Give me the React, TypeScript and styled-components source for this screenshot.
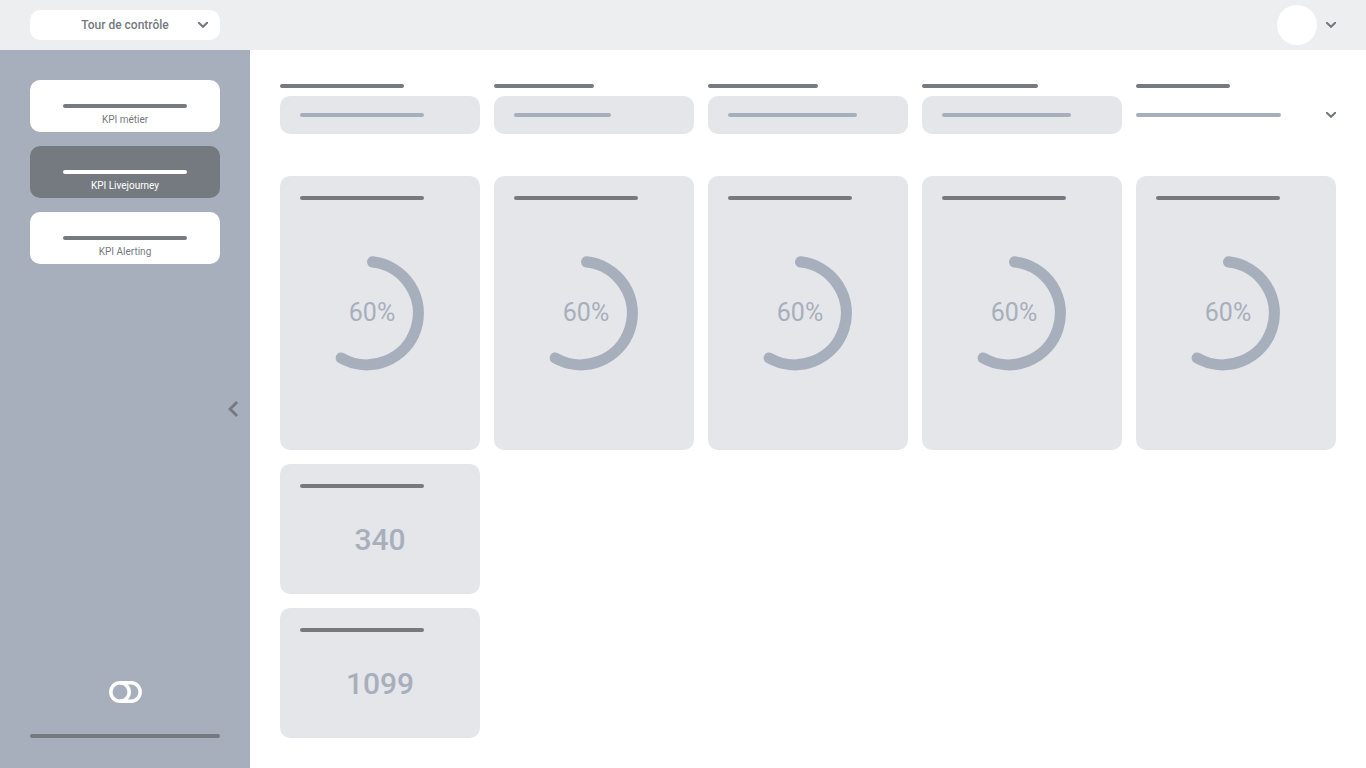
import React from "react";
import styled, { createGlobalStyle } from "styled-components";

const colors = {
  topbar: "#edeef0",
  sidebar: "#a8afbc",
  card: "#e5e6ea",
  dark: "#757a81",
  soft: "#a6afbb",
  white: "#ffffff",
};

const GlobalStyle = createGlobalStyle`
  *, *::before, *::after { box-sizing: border-box; }
  body {
    margin: 0;
    background: ${colors.white};
    color: ${colors.dark};
    font-family: Roboto, "Liberation Sans", sans-serif;
  }
  button, select { font: inherit; color: inherit; border: 0; cursor: pointer; }
`;

const Page = styled.div`
  display: flex;
  flex-direction: column;
  min-height: 100vh;
`;

const TopBar = styled.header`
  display: flex;
  align-items: center;
  justify-content: space-between;
  height: 50px;
  padding: 0 30px;
  background: ${colors.topbar};
`;

const ViewPicker = styled.div`
  position: relative;
  width: 190px;
`;

const ViewSelect = styled.select`
  appearance: none;
  display: block;
  width: 100%;
  height: 30px;
  padding: 0 24px;
  border-radius: 10px;
  background: ${colors.white};
  font-size: 12px;
  font-weight: 500;
  text-align: center;
  text-align-last: center;
`;

const PickerArrow = styled.span`
  position: absolute;
  top: 0;
  right: 12px;
  display: flex;
  align-items: center;
  height: 100%;
  pointer-events: none;
`;

const AccountButton = styled.button`
  display: flex;
  align-items: center;
  gap: 9px;
  padding: 0;
  background: none;
`;

const Avatar = styled.span`
  width: 40px;
  height: 40px;
  border-radius: 50%;
  background: ${colors.white};
`;

const Body = styled.div`
  display: flex;
  flex: 1;
`;

const Sidebar = styled.aside`
  position: relative;
  display: flex;
  flex-direction: column;
  justify-content: space-between;
  flex: 0 0 250px;
  padding: 30px;
  background: ${colors.sidebar};
`;

const Nav = styled.nav`
  display: flex;
  flex-direction: column;
  gap: 14px;
`;

const NavButton = styled.button<{ $active?: boolean }>`
  display: flex;
  flex-direction: column;
  align-items: center;
  gap: 4px;
  height: 52px;
  padding: 24px 0 0;
  border-radius: 10px;
  background: ${(p) => (p.$active ? colors.dark : colors.white)};
  color: ${(p) => (p.$active ? colors.white : colors.dark)};
  font-size: 10px;
  line-height: 16px;
`;

const Bar = styled.span<{ $width?: number; $tone?: string }>`
  display: block;
  flex: none;
  width: ${(p) => (p.$width ? `${p.$width}px` : "100%")};
  max-width: 100%;
  height: 4px;
  border-radius: 2px;
  background: ${(p) => p.$tone ?? colors.dark};
`;

const CollapseButton = styled.button`
  position: absolute;
  top: 50%;
  right: 11px;
  display: flex;
  padding: 0;
  background: none;
  transform: translateY(-50%);
`;

const SidebarFooter = styled.div`
  display: flex;
  flex-direction: column;
  align-items: center;
  gap: 31px;
`;

const Main = styled.main`
  flex: 1;
  min-width: 0;
  padding: 34px 30px 30px;
`;

const Columns = styled.div`
  display: grid;
  grid-template-columns: repeat(5, minmax(0, 1fr));
  gap: 14px;
`;

const Filters = styled(Columns)`
  margin-bottom: 42px;
`;

const Filter = styled.div`
  display: flex;
  flex-direction: column;
  gap: 8px;
`;

const FilterField = styled.button<{ $plain?: boolean }>`
  display: flex;
  align-items: center;
  justify-content: space-between;
  height: 38px;
  padding: ${(p) => (p.$plain ? "0" : "0 20px")};
  border-radius: 10px;
  background: ${(p) => (p.$plain ? "none" : colors.card)};
`;

const Card = styled.section<{ $tall?: boolean }>`
  display: flex;
  flex-direction: column;
  grid-column: ${(p) => (p.$tall ? "auto" : "1")};
  height: ${(p) => (p.$tall ? "274px" : "130px")};
  padding: 20px;
  border-radius: 10px;
  background: ${colors.card};
`;

const Gauge = styled.div`
  position: relative;
  align-self: center;
  width: 120px;
  height: 120px;
  margin: 52px 16px 0 0;
`;

const GaugeValue = styled.span`
  position: absolute;
  inset: 0;
  display: flex;
  align-items: center;
  justify-content: center;
  color: ${colors.sidebar};
  font-size: 25px;
`;

const Figure = styled.strong`
  margin-top: 34px;
  color: ${colors.sidebar};
  font-size: 30px;
  font-weight: 500;
  line-height: 36px;
  text-align: center;
`;

const ChevronDown = () => (
  <svg width="10" height="6" viewBox="0 0 10 6" fill="none" aria-hidden="true">
    <path d="M0.8 0.8L5 4.8L9.2 0.8" stroke={colors.dark} strokeWidth="2.1" strokeLinecap="round" />
  </svg>
);

const ChevronLeft = () => (
  <svg width="12" height="18" viewBox="0 0 12 18" fill="none" aria-hidden="true">
    <path d="M10.1 1.9L3 9L10.1 16.1" stroke={colors.dark} strokeWidth="2.8" />
  </svg>
);

const Logo = () => (
  <svg width="33" height="22" viewBox="0 0 33 22" fill="none" role="img" aria-label="Logo">
    <circle cx="11" cy="11" r="9.2" stroke="#fff" strokeWidth="3.5" />
    <path d="M11 1.8H22A9.2 9.2 0 0 1 22 20.2H11" stroke="#fff" strokeWidth="3.5" />
  </svg>
);

const GaugeArc = () => (
  <svg width="120" height="120" viewBox="0 0 120 120" fill="none" aria-hidden="true">
    <path
      d="M60.6 9.9A51.6 51.6 0 1 1 29.2 106"
      stroke={colors.sidebar}
      strokeWidth="11.2"
      strokeLinecap="round"
    />
  </svg>
);

const navItems = ["KPI métier", "KPI Livejourney", "KPI Alerting"];

const filters = [
  { label: 124, value: 124 },
  { label: 100, value: 97 },
  { label: 110, value: 129 },
  { label: 116, value: 129 },
  { label: 94, value: 145, dropdown: true },
];

const gauges = [60, 60, 60, 60, 60];
const figures = [340, 1099];

export default function App() {
  const [current, setCurrent] = React.useState("KPI Livejourney");

  return (
    <Page>
      <GlobalStyle />
      <TopBar>
        <ViewPicker>
          <ViewSelect aria-label="Vue">
            <option>Tour de contrôle</option>
          </ViewSelect>
          <PickerArrow>
            <ChevronDown />
          </PickerArrow>
        </ViewPicker>
        <AccountButton type="button" aria-label="Compte">
          <Avatar />
          <ChevronDown />
        </AccountButton>
      </TopBar>
      <Body>
        <Sidebar>
          <Nav>
            {navItems.map((item) => (
              <NavButton
                key={item}
                type="button"
                $active={item === current}
                onClick={() => setCurrent(item)}
              >
                <Bar $width={124} $tone={item === current ? colors.white : colors.dark} />
                {item}
              </NavButton>
            ))}
          </Nav>
          <CollapseButton type="button" aria-label="Réduire le menu">
            <ChevronLeft />
          </CollapseButton>
          <SidebarFooter>
            <Logo />
            <Bar />
          </SidebarFooter>
        </Sidebar>
        <Main>
          <Filters>
            {filters.map((filter, i) => (
              <Filter key={i}>
                <Bar $width={filter.label} />
                <FilterField type="button" $plain={filter.dropdown} aria-label={`Filtre ${i + 1}`}>
                  <Bar $width={filter.value} $tone={colors.soft} />
                  {filter.dropdown && <ChevronDown />}
                </FilterField>
              </Filter>
            ))}
          </Filters>
          <Columns>
            {gauges.map((value, i) => (
              <Card key={i} $tall>
                <Bar $width={124} />
                <Gauge>
                  <GaugeArc />
                  <GaugeValue>{value}%</GaugeValue>
                </Gauge>
              </Card>
            ))}
            {figures.map((value) => (
              <Card key={value}>
                <Bar $width={124} />
                <Figure>{value}</Figure>
              </Card>
            ))}
          </Columns>
        </Main>
      </Body>
    </Page>
  );
}
